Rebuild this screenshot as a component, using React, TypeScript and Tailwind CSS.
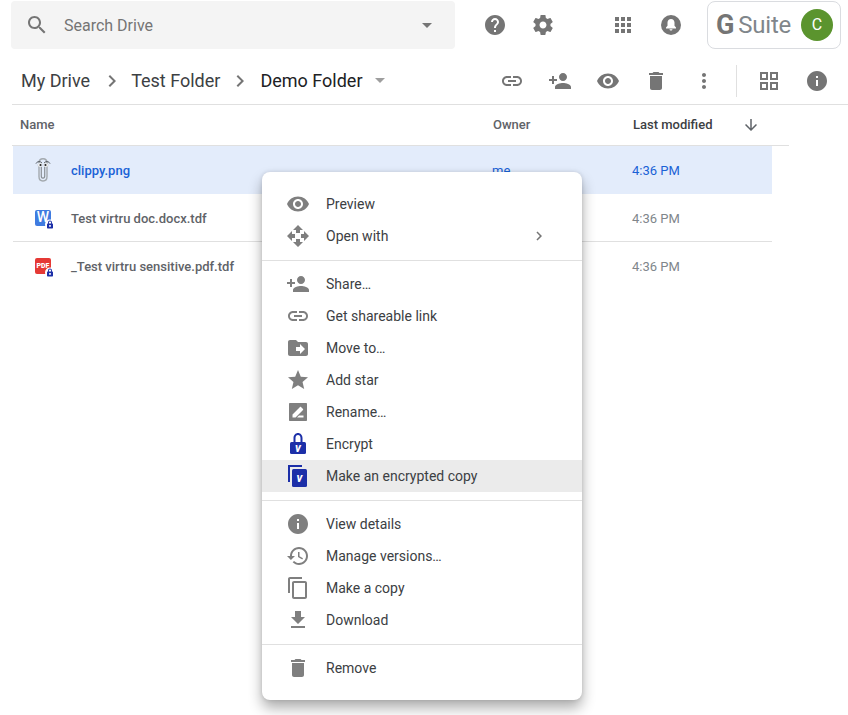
import React from "react";

const paths: Record<string, string> = {
  search: "M15.5 14h-.79l-.28-.27C15.41 12.59 16 11.11 16 9.5 16 5.91 13.09 3 9.5 3S3 5.91 3 9.5 5.91 16 9.5 16c1.61 0 3.09-.59 4.23-1.57l.27.28v.79l5 4.99L20.49 19l-4.99-5zm-6 0C7.01 14 5 11.99 5 9.5S7.01 5 9.5 5 14 7.01 14 9.5 11.99 14 9.5 14z",
  help: "M12 2C6.48 2 2 6.48 2 12s4.48 10 10 10 10-4.48 10-10S17.52 2 12 2zm1 17h-2v-2h2v2zm2.07-7.75l-.9.92C13.45 12.9 13 13.5 13 15h-2v-.5c0-1.1.45-2.1 1.17-2.83l1.24-1.26c.37-.36.59-.86.59-1.41 0-1.1-.9-2-2-2s-2 .9-2 2H8c0-2.21 1.79-4 4-4s4 1.79 4 4c0 .88-.36 1.68-.93 2.25z",
  settings: "M19.43 12.98c.04-.32.07-.64.07-.98s-.03-.66-.07-.98l2.11-1.65c.19-.15.24-.42.12-.64l-2-3.46c-.12-.22-.39-.3-.61-.22l-2.49 1c-.52-.4-1.08-.73-1.69-.98l-.38-2.65C14.46 2.18 14.25 2 14 2h-4c-.25 0-.46.18-.49.42l-.38 2.65c-.61.25-1.17.59-1.69.98l-2.49-1c-.23-.09-.49 0-.61.22l-2 3.46c-.13.22-.07.49.12.64l2.11 1.65c-.04.32-.07.65-.07.98s.03.66.07.98l-2.11 1.65c-.19.15-.24.42-.12.64l2 3.46c.12.22.39.3.61.22l2.49-1c.52.4 1.08.73 1.69.98l.38 2.65c.03.24.24.42.49.42h4c.25 0 .46-.18.49-.42l.38-2.65c.61-.25 1.17-.59 1.69-.98l2.49 1c.23.09.49 0 .61-.22l2-3.46c.12-.22.07-.49-.12-.64l-2.11-1.65zM12 15.5c-1.93 0-3.5-1.57-3.5-3.5s1.57-3.5 3.5-3.5 3.5 1.57 3.5 3.5-1.57 3.5-3.5 3.5z",
  apps: "M4 8h4V4H4v4zm6 12h4v-4h-4v4zm-6 0h4v-4H4v4zm0-6h4v-4H4v4zm6 0h4v-4h-4v4zm6-10v4h4V4h-4zm-6 4h4V4h-4v4zm6 6h4v-4h-4v4zm0 6h4v-4h-4v4z",
  link: "M3.9 12c0-1.71 1.39-3.1 3.1-3.1h4V7H7c-2.76 0-5 2.24-5 5s2.24 5 5 5h4v-1.9H7c-1.71 0-3.1-1.39-3.1-3.1zM8 13h8v-2H8v2zm9-6h-4v1.9h4c1.71 0 3.1 1.39 3.1 3.1s-1.39 3.1-3.1 3.1h-4V17h4c2.76 0 5-2.24 5-5s-2.24-5-5-5z",
  personAdd: "M15 12c2.21 0 4-1.79 4-4s-1.79-4-4-4-4 1.79-4 4 1.79 4 4 4zm-9-2V7H4v3H1v2h3v3h2v-3h3v-2H6zm9 4c-2.67 0-8 1.34-8 4v2h16v-2c0-2.66-5.33-4-8-4z",
  eye: "M12 4.5C7 4.5 2.73 7.61 1 12c1.73 4.39 6 7.5 11 7.5s9.27-3.11 11-7.5c-1.73-4.39-6-7.5-11-7.5zM12 17c-2.76 0-5-2.24-5-5s2.24-5 5-5 5 2.24 5 5-2.24 5-5 5zm0-8c-1.66 0-3 1.34-3 3s1.34 3 3 3 3-1.34 3-3-1.34-3-3-3z",
  trash: "M6 19c0 1.1.9 2 2 2h8c1.1 0 2-.9 2-2V7H6v12zM19 4h-3.5l-1-1h-5l-1 1H5v2h14V4z",
  more: "M12 8c1.1 0 2-.9 2-2s-.9-2-2-2-2 .9-2 2 .9 2 2 2zm0 2c-1.1 0-2 .9-2 2s.9 2 2 2 2-.9 2-2-.9-2-2-2zm0 6c-1.1 0-2 .9-2 2s.9 2 2 2 2-.9 2-2-.9-2-2-2z",
  grid: "M3 3h8v8H3V3zm2 2v4h4V5H5zm8-2h8v8h-8V3zm2 2v4h4V5h-4zM3 13h8v8H3v-8zm2 2v4h4v-4H5zm8-2h8v8h-8v-8zm2 2v4h4v-4h-4z",
  info: "M12 2C6.48 2 2 6.48 2 12s4.48 10 10 10 10-4.48 10-10S17.52 2 12 2zm1 15h-2v-6h2v6zm0-8h-2V7h2v2z",
  star: "M12 17.27L18.18 21l-1.64-7.03L22 9.24l-7.19-.61L12 2 9.19 8.63 2 9.24l5.46 4.73L5.82 21z",
  history: "M13 3c-4.97 0-9 4.03-9 9H1l3.89 3.89.07.14L9 12H6c0-3.87 3.13-7 7-7s7 3.13 7 7-3.13 7-7 7c-1.93 0-3.68-.79-4.94-2.06l-1.42 1.42C8.27 19.99 10.51 21 13 21c4.97 0 9-4.03 9-9s-4.03-9-9-9zm-1 5v5l4.28 2.54.72-1.21-3.5-2.08V8H12z",
  copy: "M16 1H4c-1.1 0-2 .9-2 2v14h2V3h12V1zm3 4H8c-1.1 0-2 .9-2 2v14c0 1.1.9 2 2 2h11c1.1 0 2-.9 2-2V7c0-1.1-.9-2-2-2zm0 16H8V7h11v14z",
  download: "M19 9h-4V3H9v6H5l7 7 7-7zM5 18v2h14v-2H5z",
  move: "M20 6h-8l-2-2H4c-1.1 0-2 .9-2 2v12c0 1.1.9 2 2 2h16c1.1 0 2-.9 2-2V8c0-1.1-.9-2-2-2zm-6 12v-3h-4v-4h4V8l5 5-5 5z",
  openWith: "M10 9h4V6h3l-5-5-5 5h3v3zm-1 1H6V7l-5 5 5 5v-3h3v-4zm14 2l-5-5v3h-3v4h3v3l5-5zm-9 3h-4v3H7l5 5 5-5h-3v-3z",
  rename: "M20 3H4c-.6 0-1 .4-1 1v16c0 .6.4 1 1 1h16c.6 0 1-.4 1-1V4c0-.6-.4-1-1-1zM6.500 17.500v-3l7.500-7.500c.3-.3.7-.3 1 0l2 2c.3.3.3.7 0 1l-7.500 7.500h-3zm11 0h-6.500l2-2h4.500v2z",
  arrowDown: "M20 12l-1.41-1.41L13 16.17V4h-2v12.17l-5.58-5.59L4 12l8 8 8-8z",
  chevron: "M10 6L8.59 7.41 13.17 12l-4.58 4.59L10 18l6-6z",
};

const menuIcon = "w-6 h-6 text-[#7f7f7f]";

function Icon({ name, className = "w-6 h-6 text-[#757575]" }: { name: string; className?: string }) {
  return (
    <svg viewBox="0 0 24 24" fill="currentColor" fillRule="evenodd" className={className}>
      <path d={paths[name]} />
    </svg>
  );
}

function Caret({ className }: { className: string }) {
  return (
    <svg viewBox="0 0 10 5" fill="currentColor" className={className}>
      <path d="M0 0l5 5 5-5z" />
    </svg>
  );
}

function IconBox({ name }: { name: string }) {
  return (
    <div className="w-12 h-12 flex items-center justify-center shrink-0">
      <Icon name={name} />
    </div>
  );
}

function BellIcon() {
  return (
    <svg viewBox="0 0 24 24" className="w-6 h-6 text-[#757575]">
      <circle cx="12" cy="12" r="10" fill="currentColor" />
      <path fill="#fff" d="M12 6c-2.100 0-3.500 1.600-3.500 3.600v3.200L7 14.600v.8h10v-.8l-1.500-1.800V9.600C15.500 7.600 14.100 6 12 6zm-1.500 10.200c0 .8.700 1.400 1.500 1.400s1.500-.6 1.500-1.400h-3z" />
    </svg>
  );
}

function LockIcon() {
  return (
    <svg viewBox="0 0 24 24" className="w-6 h-6">
      <path fill="#1c2fa8" d="M7.500 11V6c0-2.800 2-5 4.500-5s4.500 2.200 4.500 5v5h-2V6c0-1.700-1-3-2.500-3S9.500 4.300 9.500 6v5z" />
      <rect x="4" y="10" width="16" height="12" rx="1.500" fill="#1c2fa8" />
      <text x="12" y="19.500" textAnchor="middle" fontSize="12" fontWeight="700" fontStyle="italic" fill="#fff" fontFamily="Roboto, sans-serif">v</text>
    </svg>
  );
}

function EncryptedCopyIcon() {
  return (
    <svg viewBox="0 0 24 24" className="w-6 h-6">
      <path fill="#1c2fa8" d="M2 1h14v2H4v15H2z" />
      <rect x="6" y="5" width="15" height="18" rx="1.500" fill="#1c2fa8" />
      <text x="13.500" y="17.500" textAnchor="middle" fontSize="12" fontWeight="700" fontStyle="italic" fill="#fff" fontFamily="Roboto, sans-serif">v</text>
    </svg>
  );
}

function SmallLock() {
  return (
    <svg viewBox="0 0 10 11" className="absolute -right-[4px] -bottom-[4px] w-[10px] h-[11px]">
      <circle cx="5" cy="5.500" r="5" fill="#fff" />
      <path fill="#1c2fa8" d="M3 5V3.500C3 2.400 3.900 1.500 5 1.500s2 .9 2 2V5H6.100V3.500c0-.6-.5-1.100-1.100-1.100s-1.100.5-1.100 1.100V5z" />
      <rect x="2" y="4.500" width="6" height="5" rx=".7" fill="#1c2fa8" />
      <rect x="4.200" y="6" width="1.600" height="1.800" fill="#fff" />
    </svg>
  );
}

function ClippyIcon() {
  return (
    <svg viewBox="0 0 16 24" className="w-4 h-6">
      <path d="M4 7v11.500c0 2.700 1.800 4.500 4 4.500s4-1.800 4-4.500V5C12 2 10.500.7 8 .7S4 2 4 5" fill="none" stroke="#a3a9ae" strokeWidth="1.400" />
      <path d="M6.300 9v9c0 1.300.7 2.200 1.700 2.200s1.700-.9 1.700-2.200V9" fill="none" stroke="#8a9095" strokeWidth="1.200" />
      <path d="M1 5.500C2.500 3 5.500 3.200 7 5M9 5c1.500-1.800 4.500-2 6 .5" fill="none" stroke="#4a4f54" strokeWidth="1" />
      <ellipse cx="5" cy="7" rx="2.200" ry="1.900" fill="#fff" stroke="#b0b5ba" strokeWidth=".4" />
      <ellipse cx="11" cy="7" rx="2.200" ry="1.900" fill="#fff" stroke="#b0b5ba" strokeWidth=".4" />
      <circle cx="5.500" cy="7" r="1.100" fill="#202124" />
      <circle cx="10.500" cy="7" r="1.100" fill="#202124" />
    </svg>
  );
}

function FileBadge({ label, color, size }: { label: string; color: string; size: string }) {
  return (
    <div className={`relative w-4 h-4 rounded-[2px] flex items-center justify-center text-white ${color} ${size}`}>
      {label}
      <SmallLock />
    </div>
  );
}

type MenuEntry = { label: string; icon: React.ReactNode; active?: boolean; arrow?: boolean };

const groups: MenuEntry[][] = [
  [
    { label: "Preview", icon: <Icon name="eye" className={menuIcon} /> },
    { label: "Open with", icon: <Icon name="openWith" className={menuIcon} />, arrow: true },
  ],
  [
    { label: "Share…", icon: <Icon name="personAdd" className={menuIcon} /> },
    { label: "Get shareable link", icon: <Icon name="link" className={menuIcon} /> },
    { label: "Move to…", icon: <Icon name="move" className={menuIcon} /> },
    { label: "Add star", icon: <Icon name="star" className={menuIcon} /> },
    { label: "Rename…", icon: <Icon name="rename" className={menuIcon} /> },
    { label: "Encrypt", icon: <LockIcon /> },
    { label: "Make an encrypted copy", icon: <EncryptedCopyIcon />, active: true },
  ],
  [
    { label: "View details", icon: <Icon name="info" className={menuIcon} /> },
    { label: "Manage versions…", icon: <Icon name="history" className={menuIcon} /> },
    { label: "Make a copy", icon: <Icon name="copy" className={menuIcon} /> },
    { label: "Download", icon: <Icon name="download" className={menuIcon} /> },
  ],
  [{ label: "Remove", icon: <Icon name="trash" className={menuIcon} /> }],
];

const files = [
  { name: "clippy.png", icon: <ClippyIcon />, selected: true },
  { name: "Test virtru doc.docx.tdf", icon: <FileBadge label="W" color="bg-[#3f7be0]" size="text-[14px] font-medium" /> },
  { name: "_Test virtru sensitive.pdf.tdf", icon: <FileBadge label="PDF" color="bg-[#e53935]" size="text-[7px] font-black" /> },
];

export default function App() {
  return (
    <div className="relative w-[848px] h-[715px] overflow-hidden bg-white font-['Roboto',sans-serif]">
      {/* top bar */}
      <div className="flex items-center pt-px h-[49px]">
        <div className="ml-[11px] w-[444px] h-12 rounded-[4px] bg-[#f4f4f4] flex items-center pl-[14px] pr-[23px]">
          <Icon name="search" />
          <span className="ml-[15px] mt-[2px] text-[16px] text-[#757575] flex-1">Search Drive</span>
          <Caret className="w-[10px] h-[5px] text-[#757575]" />
        </div>
        <div className="ml-4 flex">
          <IconBox name="help" />
          <IconBox name="settings" />
        </div>
        <div className="ml-8 flex">
          <IconBox name="apps" />
          <div className="w-12 h-12 flex items-center justify-center">
            <BellIcon />
          </div>
        </div>
        <div className="ml-3 w-[134px] h-12 rounded-[8px] border border-[#dadce0] flex items-center pl-2 pr-[7px] justify-between">
          <span className="flex items-center text-[24px] text-[#80868b] tracking-[-0.2px] whitespace-nowrap">
            <span className="font-bold text-[27px] text-[#757575]">G</span>
            <span className="ml-[4px]">Suite</span>
          </span>
          <div className="w-8 h-8 rounded-full bg-[#5b942e] text-white text-[16px] flex items-center justify-center">C</div>
        </div>
      </div>

      {/* breadcrumb */}
      <div className="flex items-center h-[56px] pt-2 ml-3 border-b border-[#e0e0e0]">
        <div className="flex items-center flex-1 pl-[9px] text-[18px] text-[#3c4043]">
          <span>My Drive</span>
          <Icon name="chevron" className="w-6 h-6 text-[#757575] ml-[10px] mr-[7px]" />
          <span>Test Folder</span>
          <Icon name="chevron" className="w-6 h-6 text-[#757575] ml-[8px] mr-[8px]" />
          <span className="text-[#202124]">Demo Folder</span>
          <Caret className="w-[10px] h-[5px] text-[#9e9e9e] ml-[13px]" />
        </div>
        <div className="flex items-center pr-[7px]">
          <IconBox name="link" />
          <IconBox name="personAdd" />
          <IconBox name="eye" />
          <IconBox name="trash" />
          <IconBox name="more" />
          <div className="w-px h-8 bg-[#e0e0e0] mx-2" />
          <IconBox name="grid" />
          <IconBox name="info" />
        </div>
      </div>

      {/* file list */}
      <div className="ml-3 w-[777px] h-[41px] border-b border-[#e0e0e0] flex items-center text-[13px] font-medium text-[#5f6368]">
        <span className="ml-2 w-[473px]">Name</span>
        <span className="w-[140px]">Owner</span>
        <span className="w-[109px] text-[#3c4043]">Last modified</span>
        <Icon name="arrowDown" className="w-[18px] h-[18px] text-[#5f6368]" />
      </div>
      <div className="ml-[13px] w-[759px]">
        {files.map((f, i) => (
          <div
            key={f.name}
            className={`h-12 flex items-center text-[13px] ${f.selected ? "bg-[#e3ecfb] text-[#1a62d6]" : "text-[#5f6368]"} ${i === 1 ? "border-b border-[#e0e0e0]" : ""}`}
          >
            <div className="w-[58px] flex justify-center pl-[2px] shrink-0">{f.icon}</div>
            <span className="w-[421px] pt-[2px] font-medium">{f.name}</span>
            <span className={`w-[140px] pt-[2px] ${f.selected ? "" : "text-[#80868b]"}`}>me</span>
            <span className={`pt-[2px] ${f.selected ? "" : "text-[#80868b]"}`}>4:36 PM</span>
          </div>
        ))}
      </div>

      {/* context menu */}
      <div className="absolute left-[262px] top-[172px] w-[320px] h-[528px] rounded-[8px] bg-white shadow-[0_8px_14px_rgba(0,0,0,0.32),0_0_4px_rgba(0,0,0,0.12)] py-2">
        {groups.map((group, i) => (
          <div key={i} className={`pb-2 ${i > 0 ? "pt-[7px] border-t border-[#e0e0e0]" : "pt-2"}`}>
            {group.map((item) => (
              <div key={item.label} className={`h-8 flex items-center pl-6 pr-[34px] ${item.active ? "bg-[#ebebeb]" : ""}`}>
                {item.icon}
                <span className="ml-4 flex-1 text-[14px] text-[#3c4043]">{item.label}</span>
                {item.arrow && <Icon name="chevron" className="w-[18px] h-[18px] text-[#757575]" />}
              </div>
            ))}
          </div>
        ))}
      </div>
    </div>
  );
}
